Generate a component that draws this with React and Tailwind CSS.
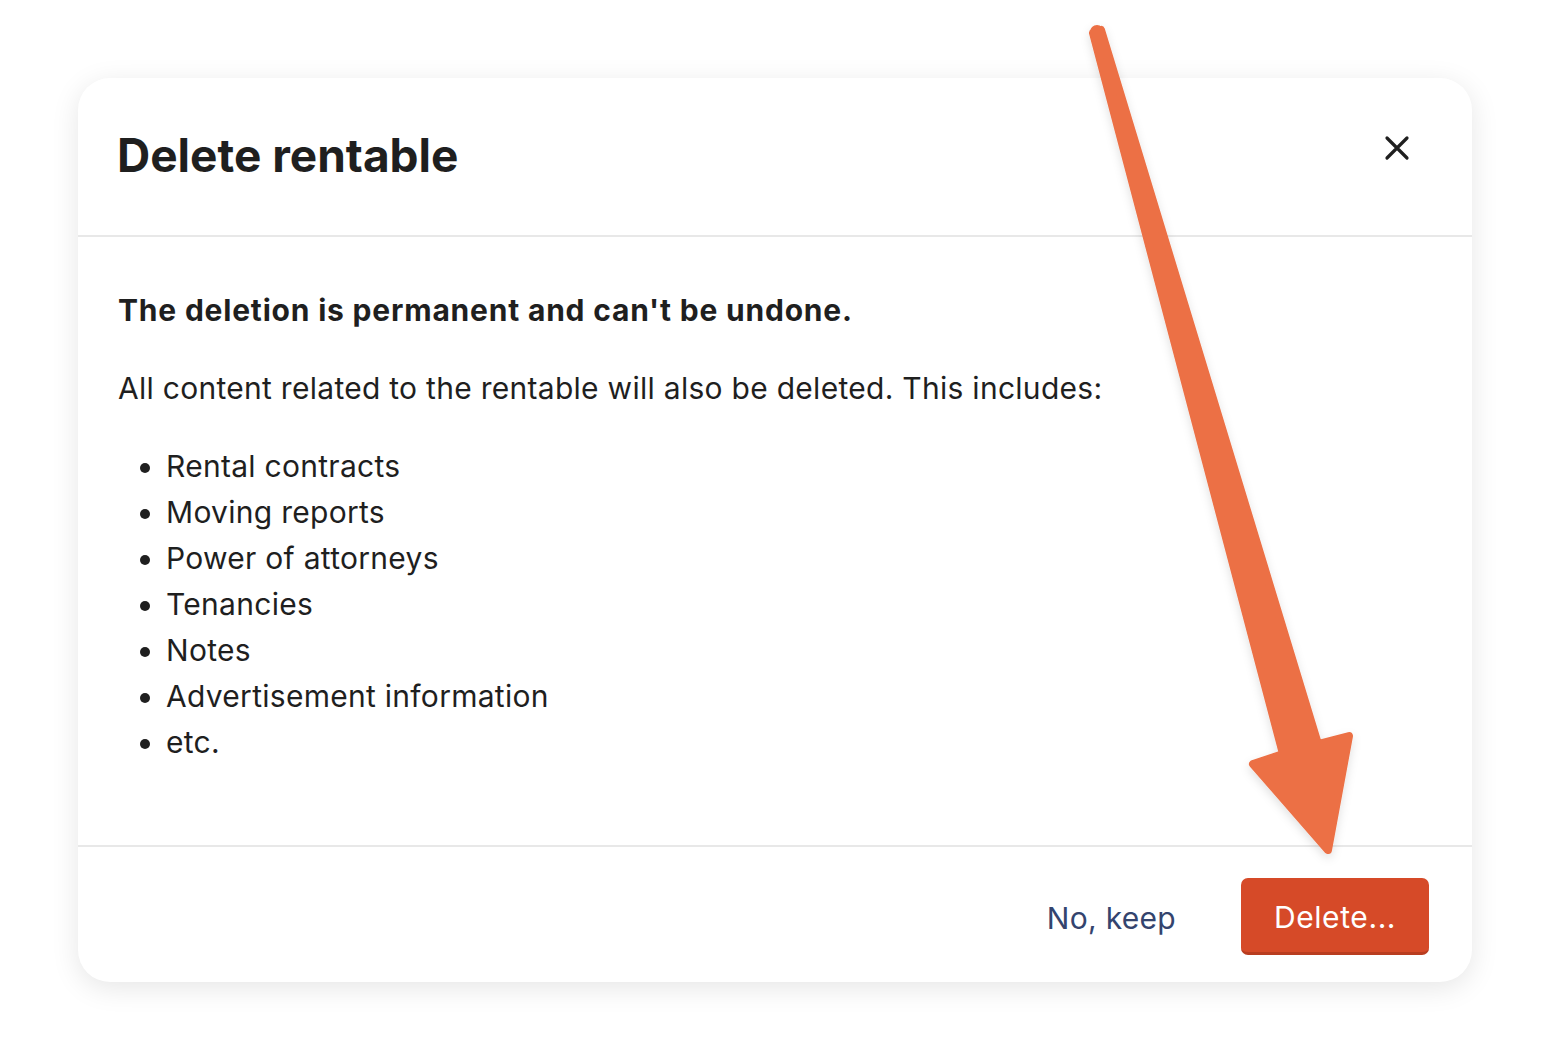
import React from "react";

const items = [
  "Rental contracts",
  "Moving reports",
  "Power of attorneys",
  "Tenancies",
  "Notes",
  "Advertisement information",
  "etc.",
];

export default function App() {
  return (
    <div
      className="relative w-[1550px] h-[1060px] bg-white overflow-hidden"
      style={{ fontFamily: "Inter, 'Noto Sans', sans-serif" }}
    >
      <div className="pt-[78px] pl-[78px]">
        <div className="w-[1394px] h-[904px] bg-white rounded-[32px] shadow-[0_6px_28px_rgba(0,0,0,0.10)] flex flex-col text-[#1f1f1f]">
          <div className="h-[159px] flex items-center justify-between pl-[39px] pr-[62px] border-b-2 border-[#e8e8e8]">
            <h1 className="text-[46px] font-bold leading-none -mt-[4px]">Delete rentable</h1>
            <svg width="26" height="26" viewBox="0 0 26 26" className="-mt-[18px]">
              <path d="M3 3 L23 23 M23 3 L3 23" stroke="#1f1f1f" strokeWidth="3.2" strokeLinecap="round" />
            </svg>
          </div>
          <div className="flex-1 pl-[40px] pt-[50px] text-[30px] leading-[46px] tracking-[0.28px]">
            <p className="font-bold tracking-[0.8px]">The deletion is permanent and can't be undone.</p>
            <p className="mt-[32px]">All content related to the rentable will also be deleted. This includes:</p>
            <ul className="mt-[32px] list-disc pl-[48px]">
              {items.map((t) => (
                <li key={t}>{t}</li>
              ))}
            </ul>
          </div>
          <div className="h-[137px] border-t-2 border-[#e8e8e8] flex items-start justify-end pr-[43px] pt-[31px] gap-[65px]">
            <button className="h-[77px] text-[30px] text-[#34446e] font-normal tracking-[0.3px] pt-[4px]">No, keep</button>
            <button className="w-[188px] h-[77px] rounded-[7px] bg-[#d64a28] border-b-[3px] border-[#b93d20] text-white text-[30px] pt-[4px] tracking-[0.6px]">
              Delete...
            </button>
          </div>
        </div>
      </div>
      <svg className="absolute left-0 top-0 pointer-events-none" width="1550" height="1060">
        <defs>
          <filter id="sh" x="-20%" y="-20%" width="140%" height="140%">
            <feDropShadow dx="0" dy="4" stdDeviation="5" floodColor="#000" floodOpacity="0.12" />
          </filter>
        </defs>
        <g filter="url(#sh)" fill="#ec7045" stroke="#ec7045" strokeLinejoin="round" strokeWidth="8">
          <path d="M1093 33 L1101 30 L1318 744 L1349 736 L1328 850 L1253 764 L1283 754 Z" />
          <circle cx="1097" cy="32" r="3" />
        </g>
      </svg>
    </div>
  );
}
